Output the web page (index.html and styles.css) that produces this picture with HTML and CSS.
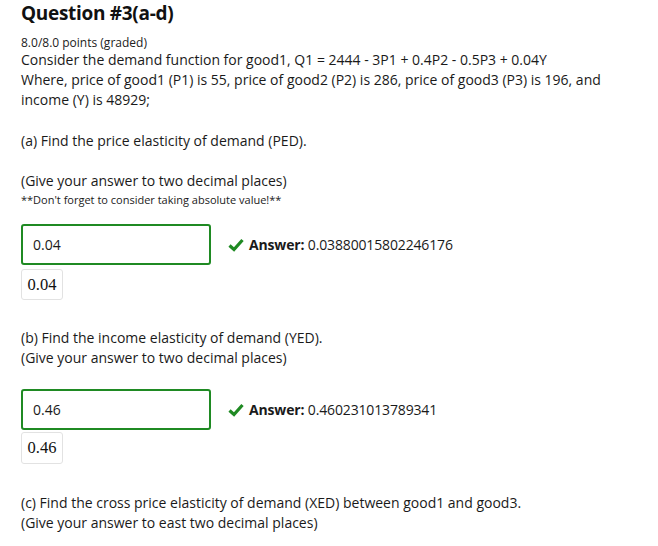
FILE: index.html
```html
<!DOCTYPE html>
<html>
<head>
<meta charset="utf-8">
<link rel="stylesheet" href="styles.css">
</head>
<body>
<div class="problem">
  <h2 class="title">Question #3(a-d)</h2>
  <div class="meta">8.0/8.0 points (graded)</div>
  <p class="text">Consider the demand function for good1, Q1 = 2444 - 3P1 + 0.4P2 - 0.5P3 + 0.04Y<br>Where, price of good1 (P1) is 55, price of good2 (P2) is 286, price of good3 (P3) is 196, and income (Y) is 48929;</p>

  <p class="text part-a">(a) Find the price elasticity of demand (PED).</p>
  <p class="text give-a">(Give your answer to two decimal places)</p>
  <p class="note">**Don't forget to consider taking absolute value!**</p>

  <div class="answer-row row-a">
    <div class="input">0.04</div>
    <div class="status">
      <svg class="check" width="16" height="14" viewBox="0 0 16 14"><path d="M1.5 7.5 L6 11.5 L14.5 2" fill="none" stroke="#1f8a23" stroke-width="3.2" stroke-linecap="butt" stroke-linejoin="miter"/></svg>
      <span class="label">Answer:</span>&nbsp;0.03880015802246176
    </div>
  </div>
  <div class="preview">0.04</div>

  <p class="text part-b">(b) Find the income elasticity of demand (YED).<br>(Give your answer to two decimal places)</p>

  <div class="answer-row row-b">
    <div class="input">0.46</div>
    <div class="status">
      <svg class="check" width="16" height="14" viewBox="0 0 16 14"><path d="M1.5 7.5 L6 11.5 L14.5 2" fill="none" stroke="#1f8a23" stroke-width="3.2" stroke-linecap="butt" stroke-linejoin="miter"/></svg>
      <span class="label">Answer:</span>&nbsp;0.460231013789341
    </div>
  </div>
  <div class="preview preview-b">0.46</div>

  <p class="text part-c">(c) Find the cross price elasticity of demand (XED) between good1 and good3.<br>(Give your answer to east two decimal places)</p>
</div>
</body>
</html>
```

FILE: styles.css
```css
html, body {
  margin: 0;
  padding: 0;
  background: #ffffff;
}
body {
  font-family: "Open Sans", "Noto Sans", sans-serif;
  color: #1a1a1a;
}
.problem {
  padding: 0 20px 0 21px;
  width: 600px;
}
.title {
  margin: 0;
  font-size: 19px;
  font-weight: 700;
  line-height: 26px;
  color: #111;
  letter-spacing: -0.3px;
}
.meta {
  margin-top: 10px;
  font-size: 12px;
  line-height: 14px;
  color: #222;
}
.text {
  margin: 0;
  font-size: 14px;
  line-height: 20px;
}
.part-a { margin-top: 21px; }
.give-a { margin-top: 20px; }
.note {
  margin: 1px 0 0;
  font-size: 11px;
  line-height: 16px;
}
.answer-row {
  display: flex;
  align-items: center;
}
.row-a { margin-top: 16px; }
.row-b { margin-top: 21px; }
.input {
  box-sizing: border-box;
  width: 190px;
  height: 41px;
  border: 2px solid #1f8a23;
  border-radius: 3px;
  padding: 0 10px;
  display: flex;
  align-items: center;
  font-size: 14px;
}
.status {
  margin-left: 17px;
  display: flex;
  align-items: center;
  font-size: 14px;
  letter-spacing: -0.15px;
}
.check {
  margin-right: 5px;
}
.label {
  font-weight: 700;
}
.preview {
  box-sizing: border-box;
  margin-top: 4px;
  width: 42px;
  height: 31px;
  border: 1px solid #e2e2e2;
  border-radius: 3px;
  display: flex;
  align-items: center;
  justify-content: center;
  font-family: "Liberation Serif", "DejaVu Serif", serif;
  font-size: 16.5px;
  color: #111;
}
.preview-b { margin-top: 2px; height: 32px; }
.part-b { margin-top: 28px; }
.part-c { margin-top: 29px; }
```
